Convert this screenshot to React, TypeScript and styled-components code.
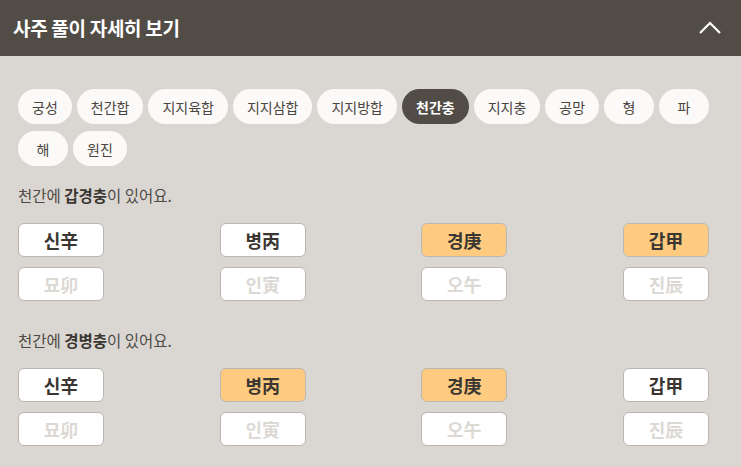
import React from 'react'
import styled, { createGlobalStyle } from 'styled-components'

const GlobalStyle = createGlobalStyle`
  html, body {
    margin: 0;
    padding: 0;
    background: #dad7d3;
    font-family: 'Noto Sans CJK KR', 'Noto Sans', sans-serif;
  }
`

const Panel = styled.div`
  width: 741px;
  height: 467px;
  background: #dad7d3;
  overflow: hidden;
`

const Header = styled.div`
  height: 56px;
  background: #514c46;
  display: flex;
  align-items: center;
  justify-content: space-between;
  padding: 0 19px 2px 13px;
  box-sizing: border-box;
`

const HeaderTitle = styled.div`
  color: #fff;
  font-size: 19px;
  font-weight: 700;
  letter-spacing: -0.3px;
`

const Body = styled.div`
  padding: 33px 32px 0 18px;
`

const ChipWrap = styled.div`
  display: flex;
  flex-wrap: wrap;
  column-gap: 5px;
  row-gap: 7px;
  width: 700px;
`

const Chip = styled.div<{ $active?: boolean }>`
  height: 35px;
  min-width: 50px;
  box-sizing: border-box;
  padding: 0 14px;
  border-radius: 18px;
  display: flex;
  align-items: center;
  justify-content: center;
  font-size: 14px;
  font-weight: ${p => (p.$active ? 700 : 400)};
  color: ${p => (p.$active ? '#fff' : '#4a4540')};
  background: ${p => (p.$active ? '#514c46' : '#fbfaf9')};
`

const Section = styled.div<{ $first?: boolean }>`
  margin-top: ${p => (p.$first ? '18px' : '28px')};
`

const Sentence = styled.div`
  font-size: 15.5px;
  color: #4f4a45;
  line-height: 22px;

  b {
    color: #3a3631;
    font-weight: 700;
  }
`

const PillarRow = styled.div`
  display: flex;
  justify-content: space-between;
  margin-top: 17px;
`

const Pillar = styled.div`
  display: flex;
  flex-direction: column;
  gap: 10px;
`

const Cell = styled.div<{ $on?: boolean; $faded?: boolean }>`
  width: 86px;
  height: 34px;
  box-sizing: border-box;
  border: 1px solid #bcb6b0;
  border-radius: 6px;
  background: ${p => (p.$on ? '#ffcb80' : '#fff')};
  color: ${p => (p.$faded ? '#dcd9d5' : '#3a3631')};
  font-size: 18px;
  font-weight: 700;
  display: flex;
  align-items: center;
  justify-content: center;
`

const tabs = ['궁성', '천간합', '지지육합', '지지삼합', '지지방합', '천간충', '지지충', '공망', '형', '파', '해', '원진']

const stems = ['신辛', '병丙', '경庚', '갑甲']
const branches = ['묘卯', '인寅', '오午', '진辰']

const sections = [
  { name: '갑경충', on: [2, 3] },
  { name: '경병충', on: [1, 2] }
]

const ChevronUp: React.FC = () => (
  <svg width="24" height="15" viewBox="0 0 24 15">
    <path d="M2 13 L12 3 L22 13" fill="none" stroke="#fff" strokeWidth="2.2" />
  </svg>
)

export default function App() {
  return (
    <Panel>
      <GlobalStyle />
      <Header>
        <HeaderTitle>사주 풀이 자세히 보기</HeaderTitle>
        <ChevronUp />
      </Header>
      <Body>
        <ChipWrap>
          {tabs.map(t => (
            <Chip key={t} $active={t === '천간충'}>{t}</Chip>
          ))}
        </ChipWrap>
        {sections.map((s, i) => (
          <Section key={s.name} $first={i === 0}>
            <Sentence>
              천간에 <b>{s.name}</b>이 있어요.
            </Sentence>
            <PillarRow>
              {stems.map((st, j) => (
                <Pillar key={st}>
                  <Cell $on={s.on.includes(j)}>{st}</Cell>
                  <Cell $faded>{branches[j]}</Cell>
                </Pillar>
              ))}
            </PillarRow>
          </Section>
        ))}
      </Body>
    </Panel>
  )
}
